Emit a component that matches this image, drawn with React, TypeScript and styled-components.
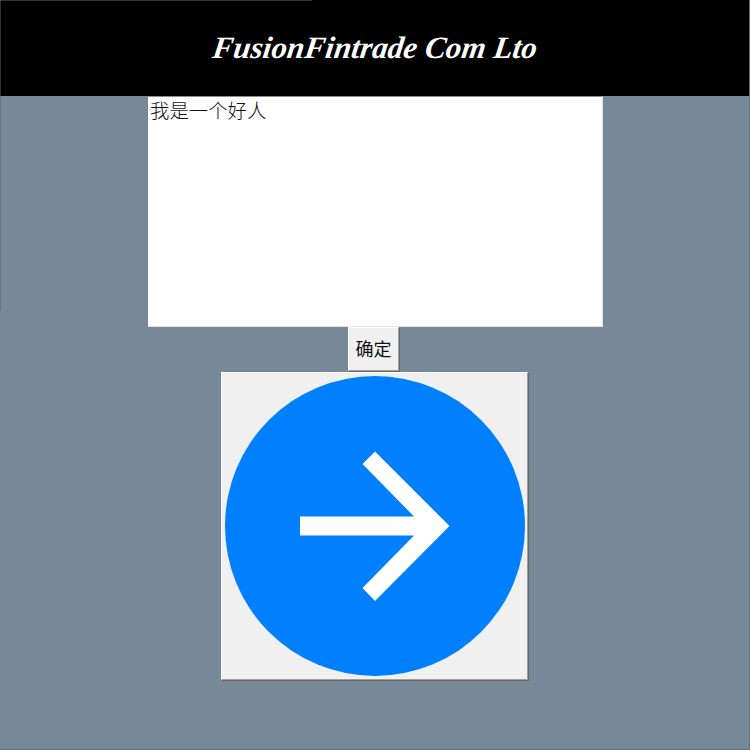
import React from 'react';
import styled, { createGlobalStyle } from 'styled-components';

const GlobalStyle = createGlobalStyle`
    html, body {
        margin: 0;
        padding: 0;
        background: #778899;
    }
`;

const Page = styled.div`
    position: relative;
    width: 750px;
    height: 750px;
    box-sizing: border-box;
    display: flex;
    flex-direction: column;
    align-items: center;
    background: #778899;
    overflow: hidden;
    border-right: 1px solid #5f6d7a;
    border-bottom: 1px solid #5f6d7a;
`;

const TopEdge = styled.div`
    position: absolute;
    left: 0;
    top: 0;
    width: 312px;
    height: 1px;
    background: #363636;
`;

const LeftEdge = styled.div`
    position: absolute;
    left: 0;
    top: 0;
    width: 1px;
    height: 311px;
    background: #5a6673;
    opacity: 0.5;
`;

const Header = styled.header`
    align-self: stretch;
    height: 96px;
    flex: none;
    margin-right: -1px;
    background: #000;
    display: flex;
    align-items: center;
    justify-content: center;
`;

const Title = styled.h1`
    margin: 0 0 2px 0;
    font-family: "Brush Script MT", "Liberation Serif", cursive;
    font-style: italic;
    font-weight: 700;
    font-size: 31px;
    line-height: 1;
    letter-spacing: 0.1px;
    color: #fff;
    transform: skewX(-8deg);
`;

const MessageBox = styled.textarea`
    display: block;
    box-sizing: border-box;
    width: 455px;
    height: 231px;
    flex: none;
    margin: 0 0 0 2px;
    padding: 1px 2px;
    border: none;
    border-top: 1px solid #8c8c8c;
    border-right: 1px solid #e3e3e3;
    border-bottom: 1px solid #e3e3e3;
    outline: none;
    resize: none;
    overflow: hidden;
    background: #fff;
    color: #111;
    font-family: "Noto Sans CJK SC", "Liberation Sans", sans-serif;
    font-size: 19.4px;
    font-weight: 300;
    line-height: 24px;
`;

const ConfirmButton = styled.button`
    box-sizing: border-box;
    width: 51px;
    height: 44px;
    flex: none;
    margin: 0 2px 1px 0;
    padding: 0 0 2px;
    border: 1px solid;
    border-color: #fff #a0a0a0 #a0a0a0 #fff;
    box-shadow: 1px 1px 0 #696969;
    background: #f0f0f0;
    color: #111;
    font-family: "Noto Sans CJK SC", "Liberation Sans", sans-serif;
    font-size: 18px;
    line-height: 1;
`;

const ArrowButton = styled.button`
    box-sizing: border-box;
    width: 307px;
    height: 308px;
    flex: none;
    margin: 0;
    padding: 0;
    display: flex;
    align-items: center;
    justify-content: center;
    border: 1px solid;
    border-color: #fff #a0a0a0 #a0a0a0 #fff;
    box-shadow: 1px 1px 0 #696969;
    background: #f0f0f0;
`;

export default function App() {
    return (
        <Page>
            <GlobalStyle />
            <Header>
                <Title>FusionFintrade Com Lto</Title>
            </Header>
            <MessageBox defaultValue="我是一个好人" />
            <ConfirmButton>确定</ConfirmButton>
            <ArrowButton>
                <svg width="300" height="300" viewBox="0 0 300 300">
                    <circle cx="150" cy="150" r="150" fill="#0080ff" />
                    <path
                        d="M75 140.500H189L137.500 88L150 75.500L224.500 150L150 225L137.500 212L189 159.500H75Z"
                        fill="#fff"
                    />
                </svg>
            </ArrowButton>
            <TopEdge />
            <LeftEdge />
        </Page>
    );
}
